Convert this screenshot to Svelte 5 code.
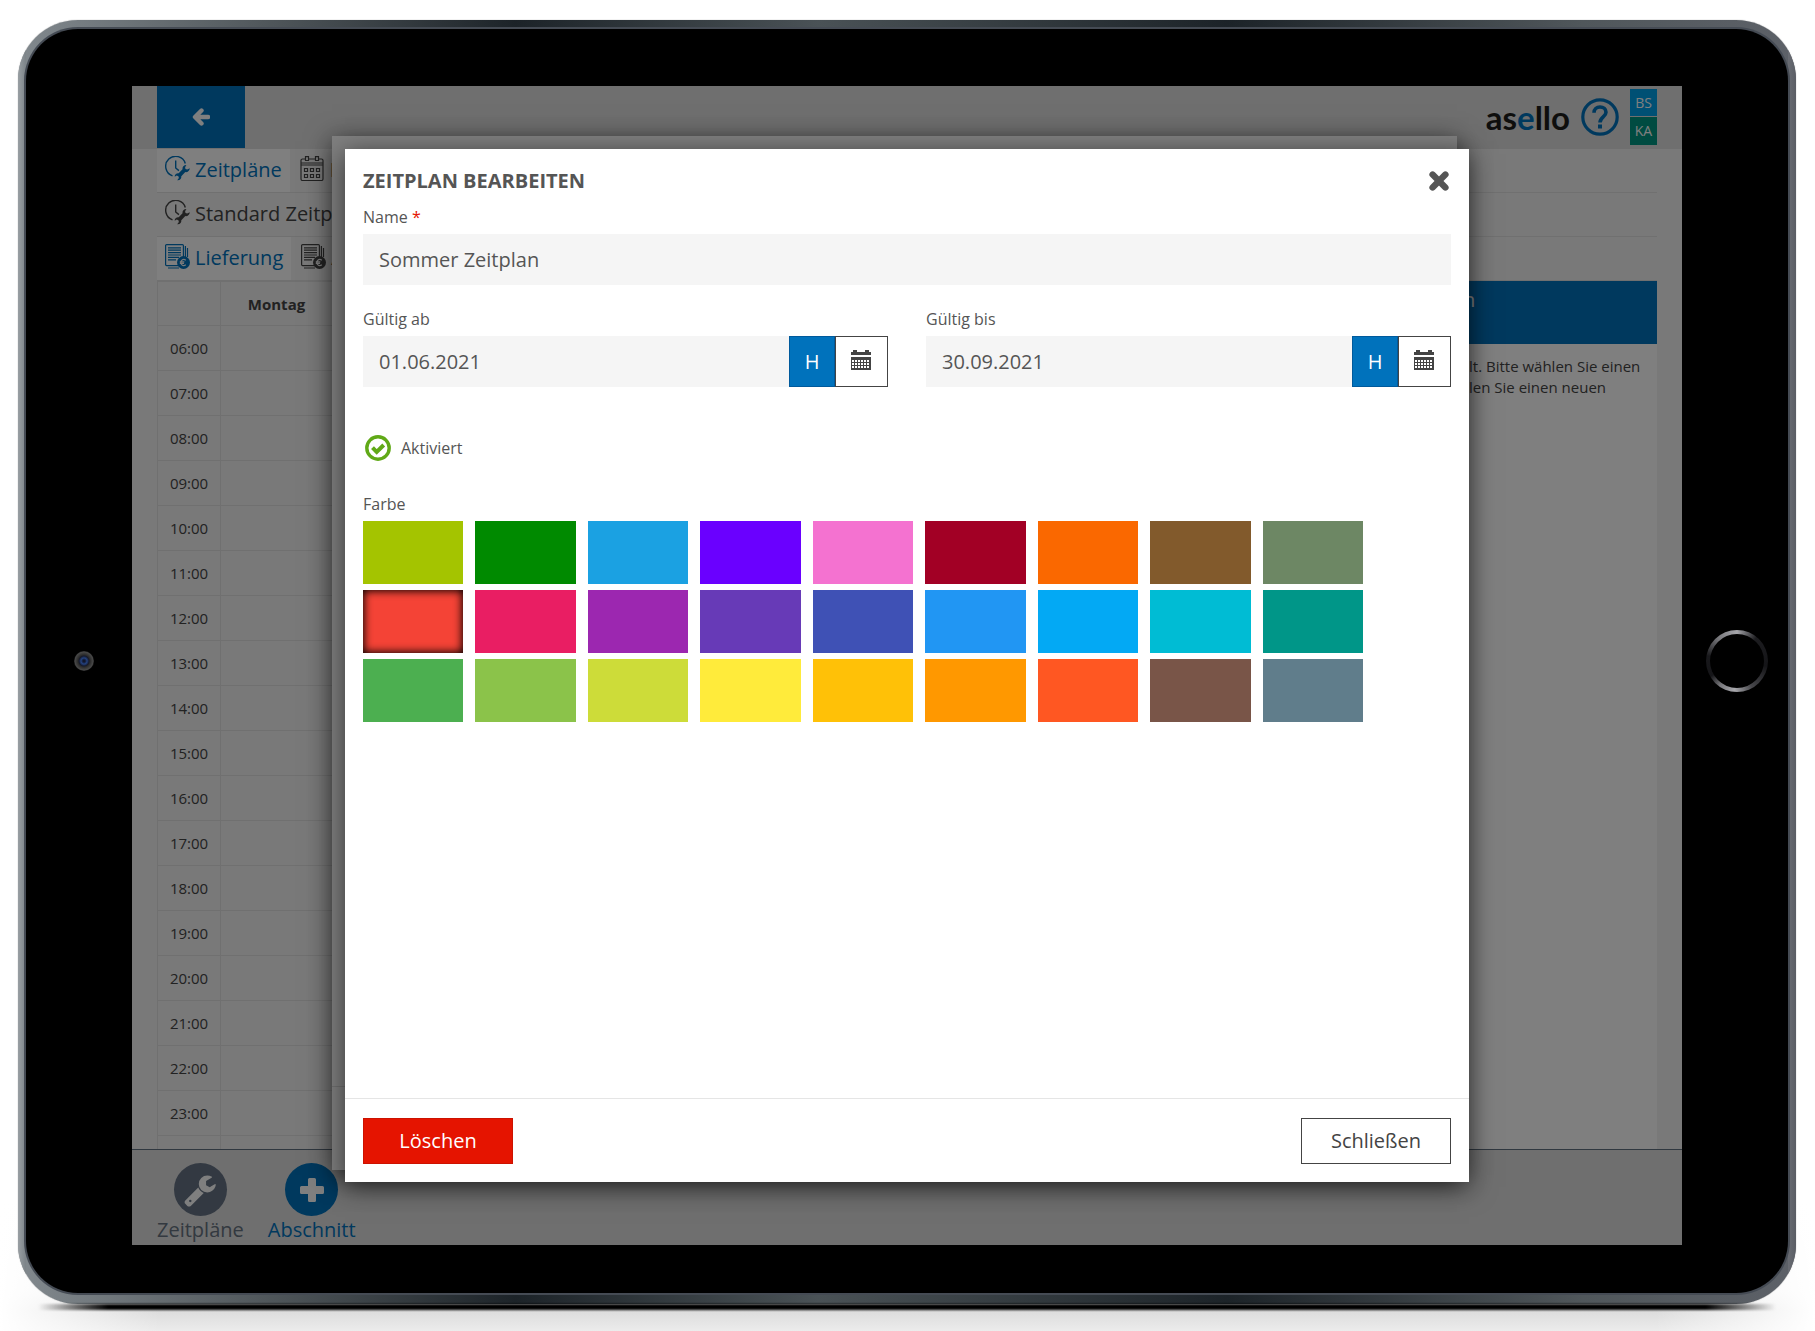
<script lang="ts">
	const hours = Array.from({ length: 18 }, (_, i) => `${String(i + 6).padStart(2, '0')}:00`);

	const colors = [
		'#a4c400', '#008a00', '#1ba1e2', '#6a00ff', '#f472d0', '#a20025', '#fa6800', '#825a2c', '#6d8764',
		'#f44336', '#e91e63', '#9c27b0', '#673ab7', '#3f51b5', '#2196f3', '#03a9f4', '#00bcd4', '#009688',
		'#4caf50', '#8bc34a', '#cddc39', '#ffeb3b', '#ffc107', '#ff9800', '#ff5722', '#795548', '#607d8b'
	];

	let name = $state('Sommer Zeitplan');
	let validFrom = $state('01.06.2021');
	let validTo = $state('30.09.2021');
	let active = $state(true);
	let color = $state('#f44336');
</script>

{#snippet clockIcon()}
	<svg class="tab-icon" viewBox="0 0 25 25" aria-hidden="true">
		<g fill="none" stroke="currentColor" stroke-width="1.4">
			<path d="M7.500 19.800A10 10 0 1 1 20.300 7.500" />
			<path d="M10.700 4.500v7.500l3.200 2.600" />
		</g>
		<path
			fill="currentColor"
			d="M24.800 12.200l-2.600 1.400-1.700-.6-.4-1.700 1.300-2.400c-2.600 0-4.200 1.900-3.900 4.300l-3.800 4.100c-2.200-.3-4.100 1.300-4 3.400l2-1.100 1.700.6.5 1.800-1.700 2.200c2.800.3 4.500-1.600 4.100-4l4-4.100c2.300.3 4.400-1.300 4.500-3.900z"
		/>
	</svg>
{/snippet}

{#snippet listIcon()}
	<svg class="tab-icon" viewBox="0 0 25 25" aria-hidden="true">
		<g fill="none" stroke="currentColor" stroke-width="1.200">
			<rect x=".6" y=".6" width="17.800" height="21" rx="1" />
			<path d="M20.400 2v11M22.500 4v9M3 24h11" />
			<path d="M3 3.800h13M3 6.200h13M3 8.600h13M3 11h13M3 13.400h11M3 15.800h8" />
		</g>
		<circle cx="18.500" cy="18.500" r="6.500" fill="currentColor" />
		<path d="M20.800 16.200a3 3 0 1 0 0 4.600M14.800 17.800h4.500M14.800 19.400h4.200" fill="none" stroke="#f2f2f2" stroke-width="1.200" />
	</svg>
{/snippet}

{#snippet calendarIcon()}
	<svg class="calendar-icon" viewBox="0 0 20 20" aria-hidden="true">
		<path fill="currentColor" d="M0 2h2V0h4v2h8V0h4v2h2v3H0zM0 7h20v13H0z" />
		<path
			d="M1 11h18M1 14h18M1 17h18"
			fill="none"
			stroke="#fff"
			stroke-dasharray="2 1"
			stroke-width="2"
		/>
	</svg>
{/snippet}

{#snippet dateField(id: string, label: string, value: string, onchange: (v: string) => void)}
	<div class="field">
		<label for={id}>{label}</label>
		<div class="date">
			<input {id} type="text" {value} oninput={(e) => onchange(e.currentTarget.value)} />
			<button class="today" type="button">H</button>
			<button class="pick" type="button" aria-label="Kalender">{@render calendarIcon()}</button>
		</div>
	</div>
{/snippet}

<main>
	<div class="tablet">
		<div class="glass">
			<div class="bezel"><span class="camera"></span></div>
			<div class="screen">
				<header>
					<button class="back" type="button" aria-label="Zurück">
						<svg viewBox="0 0 18 18" aria-hidden="true">
							<path d="M9.500 2.500L3 9l6.500 6.500M4 9h12" fill="none" stroke="currentColor" stroke-linecap="round" stroke-linejoin="round" stroke-width="4.400" />
						</svg>
					</button>
					<div class="brand">
						<span class="logo">as<b>e</b>llo</span>
						<svg class="help" viewBox="0 0 38 38" aria-hidden="true">
							<g fill="none" stroke="currentColor">
								<circle cx="19" cy="19" r="17.200" stroke-width="3.200" />
								<path d="M13 14.800c0-3.800 2.600-5.800 6-5.800s6 2 6 5.200c0 4.600-6 4.800-6 10.300" stroke-width="3.600" />
							</g>
							<rect x="17" y="26.500" width="4" height="4" fill="currentColor" />
						</svg>
						<div class="users"><span>BS</span><span>KA</span></div>
					</div>
				</header>

				<div class="content">
					<nav>
						<a class="tab current" href="#zeitplaene">{@render clockIcon()}Zeitpläne</a>
						<a class="tab" href="#feiertage">
							<svg class="tab-icon" viewBox="0 0 25 25" aria-hidden="true">
								<g fill="none" stroke="currentColor" stroke-width="1.200">
									<path d="M5.500 3H2.500a1.500 1.500 0 0 0-1.500 1.500V23a1.500 1.500 0 0 0 1.500 1.500h19A1.500 1.500 0 0 0 23 23V4.500A1.500 1.500 0 0 0 21.500 3h-3M8.500 3h7M1 7h22M1 9h22" />
									<path d="M5.500 4.500V.6h3v3.900zM15.500 4.500V.6h3v3.900z" />
									<path d="M4.500 12.500h3v3h-3zM10.500 12.500h3v3h-3zM16.500 12.500h3v3h-3zM4.500 18.500h3v3h-3zM10.500 18.500h3v3h-3zM16.500 18.500h3v3h-3z" />
								</g>
							</svg>F
						</a>
					</nav>
					<nav>
						<a class="tab" href="#standard">{@render clockIcon()}Standard Zeitplan</a>
					</nav>
					<nav>
						<a class="tab current" href="#lieferung">{@render listIcon()}Lieferung</a>
						<a class="tab" href="#abholung">{@render listIcon()}A</a>
					</nav>

					<div class="plan">
						<table>
							<thead>
								<tr><th class="hour"></th><th class="day">Montag</th><th></th></tr>
							</thead>
							<tbody>
								{#each hours as hour (hour)}
									<tr><td class="hour">{hour}</td><td></td><td></td></tr>
								{/each}
								<tr><td class="hour"></td><td></td><td></td></tr>
							</tbody>
						</table>
						<aside>
							<h2>n</h2>
							<p>lt. Bitte wählen Sie einen<br />len Sie einen neuen</p>
						</aside>
					</div>
				</div>

				<footer>
					<button class="action muted" type="button">
						<span class="disc">
							<svg viewBox="0 0 1792 1792" width="34" height="34" aria-hidden="true">
								<path fill="currentColor" d="M448 1472q0-26-19-45t-45-19-45 19-19 45 19 45 45 19 45-19 19-45zm644-420l-682 682q-37 37-90 37-52 0-91-37l-106-108q-38-36-38-90 0-53 38-91l681-681q39 98 114.500 173.500t173.500 114.500zm634-435q0 39-23 106-47 134-164.500 217.500t-258.500 83.500q-185 0-316.500-131.500t-131.500-316.500 131.500-316.500 316.500-131.500q58 0 121.500 16.500t107.500 46.500q16 11 16 28t-16 28l-293 169v224l193 107q5-3 79-48.500t135.500-81 70.500-35.500q15 0 23.500 10t8.500 25z" />
							</svg>
						</span>
						Zeitpläne
					</button>
					<button class="action" type="button">
						<span class="disc">
							<svg viewBox="0 0 24 24" width="24" height="24" aria-hidden="true">
								<path d="M9.500 0h5a1.500 1.500 0 0 1 1.500 1.500V8h6.500A1.500 1.500 0 0 1 24 9.500v5a1.500 1.500 0 0 1-1.500 1.500H16v6.500a1.500 1.500 0 0 1-1.500 1.500h-5A1.500 1.500 0 0 1 8 22.500V16H1.500A1.500 1.500 0 0 1 0 14.500v-5A1.500 1.500 0 0 1 1.500 8H8V1.500A1.500 1.500 0 0 1 9.500 0z" fill="currentColor" />
							</svg>
						</span>
						Abschnitt
					</button>
				</footer>

				<div class="layer back-layer"><div class="sheet"><div class="rule"></div></div></div>
				<div class="layer dim">
					<form class="sheet" onsubmit={(e) => e.preventDefault()}>
						<div class="body">
							<div class="title">
								<h1>ZEITPLAN BEARBEITEN</h1>
								<button class="close" type="button" aria-label="Dialog schließen">
									<svg viewBox="0 0 20 20" aria-hidden="true">
										<path d="M3.600 3.600l12.800 12.800M16.400 3.600L3.600 16.400" fill="none" stroke="currentColor" stroke-linecap="round" stroke-width="6.400" />
									</svg>
								</button>
							</div>

							<div class="field">
								<label for="name">Name <span class="required">*</span></label>
								<input id="name" type="text" bind:value={name} />
							</div>

							<div class="dates">
								{@render dateField('from', 'Gültig ab', validFrom, (v) => (validFrom = v))}
								{@render dateField('to', 'Gültig bis', validTo, (v) => (validTo = v))}
							</div>

							<label class="toggle">
								<input type="checkbox" bind:checked={active} />
								<svg viewBox="0 0 26 26" aria-hidden="true">
									<circle cx="13" cy="13" r="11.200" fill="none" stroke="currentColor" stroke-width="3.400" />
									{#if active}
										<path d="M7.500 12.700l4.200 4.300 7-7" fill="none" stroke="currentColor" stroke-width="4" />
									{/if}
								</svg>
								Aktiviert
							</label>

							<fieldset>
								<legend>Farbe</legend>
								<div class="swatches">
									{#each colors as c (c)}
										<input type="radio" name="color" value={c} aria-label={c} bind:group={color} style:background-color={c} />
									{/each}
								</div>
							</fieldset>
						</div>
						<div class="buttons">
							<button class="delete" type="button">Löschen</button>
							<button class="cancel" type="button">Schließen</button>
						</div>
					</form>
				</div>
			</div>
			<div class="bezel"><span class="home"></span></div>
		</div>
	</div>
</main>

<style>
	:global(body) {
		background: #fff;
	}

	main {
		background:
			linear-gradient(90deg, #fff, transparent 160px, transparent calc(100% - 160px), #fff),
			linear-gradient(#fff calc(100% - 130px), #f0f0f0 calc(100% - 40px), #dcdcdc calc(100% - 20px), #ececec);
		box-sizing: border-box;
		color: #555;
		display: flex;
		font-family: 'Open Sans', 'Noto Sans', sans-serif;
		font-size: 20px;
		height: 100vh;
		line-height: 28px;
		min-height: 900px;
		padding: 20px 19px 27px 18px;
	}

	main *,
	main *::before,
	main *::after {
		box-sizing: border-box;
	}

	button,
	input {
		border: none;
		border-radius: 0;
		color: inherit;
		font: inherit;
		margin: 0;
		padding: 0;
	}

	a {
		color: inherit;
		text-decoration: none;
	}

	svg {
		display: block;
		flex: none;
	}

	/* Device frame */
	.tablet {
		background:
			linear-gradient(90deg, #82898e, #50575b 14%, #1c2328 28%, #4a5256 45%, #1c2328 68%, #50575b 88%, #5d6168);
		border-radius: 60px;
		box-shadow: 0 0 1px #777;
		display: flex;
		flex: 1;
		padding: 9px 8px 11px;
		position: relative;
	}

	.tablet::before {
		background: linear-gradient(90deg, #999fa3, #7c8388 8px, transparent 8px, transparent calc(100% - 8px), #696c73 calc(100% - 8px), #5a5d64);
		border-radius: 60px;
		content: '';
		inset: 0;
		position: absolute;
	}

	/* contact shadow along the bottom edge */
	.tablet::after {
		background: linear-gradient(90deg, transparent, #000 70px, #000 calc(100% - 70px), transparent);
		content: '';
		filter: blur(1px);
		height: 6px;
		inset: 100% 20px auto;
		position: absolute;
	}

	.glass {
		background: #000;
		border-radius: 52px;
		box-shadow: 0 0 0 2px #454b54;
		display: flex;
		flex: 1;
		padding: 57px 0 48px;
		position: relative;
	}

	.bezel {
		align-items: center;
		display: flex;
		flex: none;
		justify-content: center;
		padding-bottom: 10px;
		width: 106px;
	}

	.camera {
		background: radial-gradient(circle at 50% 50%, #11162b 0 1px, #23417f 3px, #15192a 5px, #2a2a2a 6px, #484848 9px, #2a2a2a 10px);
		border-radius: 50%;
		height: 20px;
		margin-left: 10px;
		width: 20px;
	}

	.home {
		background: conic-gradient(#a5a5aa, #1c1c1f 40deg, #151518 100deg, #46464a 150deg, #a8a8ad 185deg, #77777b 215deg, #151518 240deg, #18181b 280deg, #77777b 320deg, #a5a5aa);
		border-radius: 50%;
		height: 62px;
		margin-left: 4px;
		position: relative;
		width: 62px;
	}

	.home::before {
		background: #000;
		border-radius: 50%;
		content: '';
		inset: 4px;
		position: absolute;
	}

	.screen {
		background: #f2f2f2;
		display: flex;
		flex: 1;
		flex-direction: column;
		min-width: 0;
		overflow: hidden;
		position: relative;
	}

	/* Page under the dialogs */
	header {
		background: #dedede;
		display: flex;
		flex: none;
		height: 63px;
		justify-content: space-between;
		padding: 0 25px;
	}

	.back {
		background: #0072bc;
		color: #fff;
		height: 62px;
		width: 88px;
	}

	.back svg {
		height: 18px;
		margin: 0 auto;
		width: 18px;
	}

	.brand {
		align-items: center;
		display: flex;
		gap: 11px;
		height: 62px;
	}

	.logo {
		color: #1d1d1b;
		font-family: Lato, sans-serif;
		font-size: 33px;
		font-weight: 700;
	}

	.logo b {
		color: #0072bc;
		font-weight: inherit;
	}

	.help {
		color: #0072bc;
		height: 38px;
		width: 38px;
	}

	.users {
		color: #fff;
		display: grid;
		font-size: 14px;
		gap: 1px;
		grid-template-rows: 27px 28px;
		line-height: 28px;
		text-align: center;
		width: 27px;
	}

	.users span {
		background: #00a0e8;
	}

	.users span + span {
		background: #009682;
	}

	.content {
		color: #444;
		display: flex;
		flex: 1;
		flex-direction: column;
		min-height: 0;
		overflow: hidden;
		padding: 0 25px;
	}

	nav {
		border-bottom: 1px solid #e0e0e0;
		display: flex;
		flex: none;
		gap: 2px;
		height: 44px;
	}

	.tab {
		align-items: flex-start;
		display: flex;
		gap: 5px;
		padding: 7px 8px;
		white-space: nowrap;
	}

	.tab.current {
		background: #fff;
		color: #0072bc;
	}

	.tab-icon {
		height: 25px;
		width: 25px;
	}

	.plan {
		align-items: stretch;
		display: flex;
		flex: 1;
		min-height: 0;
	}

	table {
		align-self: flex-start;
		border-collapse: collapse;
		flex: 1;
		font-size: 15px;
		table-layout: fixed;
	}

	td,
	th {
		border: 1px solid #e0e0e0;
		height: 45px;
		padding: 0;
		text-align: center;
	}

	th {
		height: 44px;
	}

	.hour {
		width: 63px;
	}

	.day {
		width: 112px;
	}

	aside {
		background: #fff;
		font-size: 15px;
		line-height: 21px;
		width: 240px;
	}

	aside h2 {
		background: #0072bc;
		color: #fff;
		font-size: 20px;
		font-weight: 400;
		height: 63px;
		line-height: 38px;
		margin: 0;
		padding-left: 46px;
	}

	aside p {
		margin: 12px 0;
		padding-left: 52px;
		white-space: nowrap;
	}

	footer {
		background: #dedede;
		border-top: 1px solid #607080;
		display: flex;
		flex: none;
		gap: 24px;
		height: 96px;
		padding: 13px 25px 0;
	}

	.action {
		align-items: center;
		background: none;
		color: #0072bc;
		display: flex;
		flex-direction: column;
	}

	.muted {
		color: #667280;
	}

	.disc {
		align-items: center;
		background: #0072bc;
		border-radius: 50%;
		display: flex;
		height: 53px;
		justify-content: center;
		width: 53px;
	}

	.disc svg {
		color: #fff;
	}

	.muted .disc {
		background: #667385;
	}

	/* Stacked dialogs */
	.layer {
		display: flex;
		inset: 0;
		padding: 63px 213px;
		position: absolute;
	}

	.back-layer {
		padding: 50px 225px 75px 200px;
	}

	.back-layer .rule {
		border-bottom: 1px solid #e0e0e0;
		flex: 1;
		margin-bottom: 83px;
	}

	.dim {
		background: rgb(0 0 0 / 50%);
	}

	.sheet {
		background: #fff;
		box-shadow: 0 5px 25px rgb(0 0 0 / 60%);
		display: flex;
		flex: 1;
		flex-direction: column;
		min-width: 0;
	}

	.body {
		flex: 1;
		font-size: 16px;
		line-height: 22px;
		padding: 18px 18px 0;
	}

	.title {
		align-items: center;
		display: flex;
		height: 28px;
		justify-content: space-between;
	}

	h1 {
		font-size: 20px;
		font-weight: 700;
		margin: 0;
	}

	.close {
		background: none;
		padding: 0 2px;
	}

	.close svg {
		height: 20px;
		width: 20px;
	}

	.field {
		display: flex;
		flex-direction: column;
		gap: 6px;
		padding-top: 11px;
	}

	.required {
		color: #e51400;
	}

	.field input {
		background: #f5f5f5;
		flex: 1;
		font-size: 20px;
		min-height: 51px;
		min-width: 0;
		padding: 0 16px;
	}

	.dates {
		display: grid;
		gap: 38px;
		grid-template-columns: 1fr 1fr;
		padding-top: 12px;
	}

	.date {
		display: flex;
	}

	.date button {
		border: 1px solid #444;
		font-size: 20px;
	}

	.date .today {
		background: #0072bc;
		border-color: #005a9c;
		color: #fff;
		width: 46px;
	}

	.date .pick {
		background: #fff;
		color: #444;
		padding: 0 2px 4px 0;
		width: 53px;
	}

	.calendar-icon {
		height: 20px;
		margin: 0 auto;
		width: 20px;
	}

	.toggle {
		align-items: center;
		display: flex;
		gap: 10px;
		margin-top: 48px;
		padding-left: 2px;
		position: relative;
		width: max-content;
	}

	.toggle input {
		height: 26px;
		opacity: 0;
		position: absolute;
		width: 26px;
	}

	.toggle svg {
		color: #60a917;
		height: 26px;
		width: 26px;
	}

	fieldset {
		border: none;
		margin: 32px 0 0;
		padding: 0 88px 0 0;
	}

	legend {
		padding: 0;
	}

	.swatches {
		display: grid;
		gap: 6px 12px;
		grid-template-columns: repeat(9, 1fr);
		padding-top: 6px;
	}

	.swatches input {
		appearance: none;
		height: 63px;
		width: 100%;
	}

	.swatches input:checked {
		box-shadow: inset 0 0 8px 1px #000;
	}

	.buttons {
		border-top: 1px solid #e5e5e5;
		display: flex;
		justify-content: space-between;
		padding: 19px 18px 18px;
	}

	.buttons button {
		border: 1px solid #444;
		height: 46px;
		width: 150px;
	}

	.buttons .delete {
		background: #e51400;
		border-color: #cc1200;
		color: #fff;
	}

	.buttons .cancel {
		background: #fff;
		color: #444;
	}
</style>
